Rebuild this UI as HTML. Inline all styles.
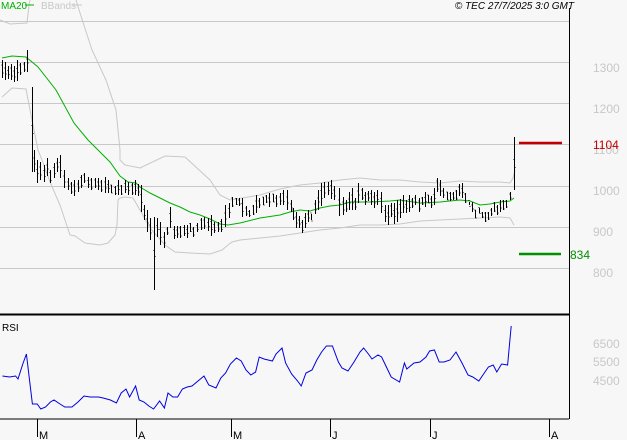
<!DOCTYPE html>
<html><head><meta charset="utf-8"><style>
html,body{margin:0;padding:0;background:#f7f7f7;width:627px;height:440px;overflow:hidden}
svg{display:block;font-family:"Liberation Sans",sans-serif}
</style></head><body>
<svg id="s" width="627" height="440" xmlns="http://www.w3.org/2000/svg">
<rect width="627" height="440" fill="#f7f7f7"/>
<g stroke="#c8c8c8" stroke-width="1">
<line x1="0" y1="21.5" x2="569" y2="21.5"/><line x1="0" y1="62.5" x2="569" y2="62.5"/><line x1="0" y1="103.5" x2="569" y2="103.5"/><line x1="0" y1="144.5" x2="569" y2="144.5"/><line x1="0" y1="186.5" x2="569" y2="186.5"/><line x1="0" y1="227.5" x2="569" y2="227.5"/><line x1="0" y1="268.5" x2="569" y2="268.5"/>
</g>
<g fill="#c8c8c8" font-size="12">
<text x="593" y="72">1300</text><text x="593" y="113">1200</text><text x="593" y="154">1100</text><text x="593" y="195">1000</text><text x="593" y="236">900</text><text x="593" y="277">800</text>
<text x="593" y="348">6500</text><text x="593" y="366">5500</text><text x="593" y="385">4500</text>
</g>
<polyline fill="none" stroke="#c8c8c8" points="0,20 10,24 27,23 29,5 30,0"/>
<polyline fill="none" stroke="#c8c8c8" points="76,0 80,13 92,50 106,80 116,110 120,150 120,160 125,165 140,168 165,156 185,157 210,180 220,195 230,200 260,195 280,189 300,185 320,183 340,180 360,178 380,180 400,180 420,182 440,183 460,181 480,182 500,182 510,183 513,178 515,170"/>
<polyline fill="none" stroke="#c8c8c8" points="2,97 12,88 26,89 32,120 38,150 42,160 50,182 60,205 70,235 75,236 85,243 100,245 108,243 115,235 117,225 118,200 120,198 125,197 133,198 140,210 150,228 165,245 175,252 190,253 210,254 222,250 228,245 232,242 240,240 260,238 280,236 300,233 320,230 340,228 360,225 380,225 400,224 420,221 440,220 460,219 480,218 500,217 510,218 514,225"/>
<polyline fill="none" stroke="#00b000" points="2,58 12,56 26,57 38,67 56,90 74,123 88,140 100,152 110,162 120,176 128,182 136,183 140,187 150,193 160,198 170,203 180,207 190,212 200,215 210,219 220,224 228,225 240,223 260,218 280,215 290,212 300,210 310,211 320,208 330,206 340,205 350,202 370,202 390,201 400,200 420,203 440,202 460,200 470,201 480,205 490,204 500,202 510,201 514,198"/>
<g id="bars" stroke="#000" stroke-width="1"></g>
<line x1="519" y1="143" x2="562" y2="143" stroke="#c00000" stroke-width="2.5"/>
<text x="593" y="149" fill="#c00000" font-size="12">1104</text>
<line x1="519" y1="254" x2="561" y2="254" stroke="#009000" stroke-width="2.5"/>
<text x="570" y="259" fill="#009000" font-size="12">834</text>
<line x1="0" y1="314.5" x2="569" y2="314.5" stroke="#000" stroke-width="2"/>
<line x1="569.5" y1="8" x2="569.5" y2="419" stroke="#000"/>
<line x1="0" y1="419" x2="569" y2="419" stroke="#000"/>
<text x="2" y="331" font-size="10" fill="#000">RSI</text>
<polyline id="rsi" fill="none" stroke="#0000e0" points=""/>
<g stroke="#000"><line x1="37.5" y1="419" x2="37.5" y2="437"/><line x1="136.5" y1="419" x2="136.5" y2="437"/><line x1="231.5" y1="419" x2="231.5" y2="437"/><line x1="330.5" y1="419" x2="330.5" y2="437"/><line x1="430.5" y1="419" x2="430.5" y2="437"/><line x1="549.5" y1="419" x2="549.5" y2="437"/></g>
<g font-size="11" fill="#000"><text x="39" y="439">M</text><text x="138" y="439">A</text><text x="233" y="439">M</text><text x="332" y="439">J</text><text x="432" y="439">J</text><text x="551" y="439">A</text></g>
<text x="1" y="9" font-size="10" fill="#00b000">MA20</text><line x1="25" y1="5" x2="34" y2="5" stroke="#00b000"/>
<text x="41" y="9" font-size="10" fill="#c8c8c8">BBands</text><line x1="73" y1="5" x2="82" y2="5" stroke="#c8c8c8"/>
<text x="574" y="9" font-size="10" font-style="italic" fill="#000" text-anchor="end">© TEC 27/7/2025 3:0 GMT</text>
</svg>
<script>
var d=[[2,60,78],[5,62,80],[8,66,79],[11,64,80],[14,66,82],[17,60,81],[20,63,75],[24,62,72],[27,50,72],[32,87,172],[34,150,172],[37,160,183],[40,162,180],[44,165,182],[47,158,176],[50,170,183],[54,163,178],[57,158,172],[60,155,178],[64,170,188],[68,178,190],[71,182,194],[74,180,196],[78,180,192],[81,175,188],[84,173,183],[88,177,188],[91,178,190],[95,178,188],[98,178,190],[101,180,192],[105,177,193],[108,180,193],[111,185,193],[115,186,195],[118,180,195],[121,185,195],[125,180,193],[128,182,195],[132,183,195],[135,180,195],[138,184,196],[141,185,212],[144,205,220],[147,210,232],[150,218,240],[154,217,290],[157,218,237],[160,222,245],[164,232,248],[167,227,235],[170,207,228],[174,226,239],[177,226,238],[180,226,238],[184,225,236],[187,225,238],[190,223,232],[193,227,237],[197,223,232],[201,218,230],[204,217,229],[208,218,231],[211,215,236],[214,222,233],[218,222,232],[221,219,232],[225,205,227],[229,203,218],[232,197,207],[236,198,205],[239,198,206],[242,198,217],[246,206,216],[249,210,217],[253,205,215],[256,195,213],[259,198,208],[263,197,205],[266,195,203],[269,193,207],[273,194,202],[276,195,207],[280,193,205],[283,190,205],[287,190,210],[291,200,212],[293,208,220],[296,212,228],[299,216,228],[302,220,233],[305,213,228],[308,210,222],[311,214,220],[315,200,214],[318,190,210],[321,183,206],[324,182,198],[328,182,195],[331,180,199],[334,186,200],[339,188,216],[343,197,215],[346,200,212],[349,192,210],[352,188,210],[355,198,210],[358,183,203],[362,188,200],[365,192,205],[368,191,201],[371,190,205],[374,192,208],[377,190,205],[381,192,213],[385,205,222],[388,205,225],[391,203,217],[394,203,224],[397,200,222],[400,199,218],[403,195,213],[406,200,213],[409,195,212],[412,198,208],[415,195,205],[419,198,212],[422,197,205],[425,192,207],[428,195,203],[431,196,208],[434,188,205],[437,178,192],[440,180,196],[443,188,198],[447,192,200],[450,192,201],[453,192,200],[456,190,200],[459,184,196],[462,183,198],[465,193,203],[469,202,205],[472,202,212],[475,210,218],[479,208,213],[482,212,218],[485,212,222],[488,212,220],[491,208,216],[494,202,212],[497,205,215],[500,200,212],[503,200,210],[506,200,208],[510,192,200],[514,137,190]];
var g=document.getElementById('bars'),h='';
d.forEach(function(b,i){var x=b[0]+0.5,m=(b[1]+b[2])/2,o=(i%3)-1;h+='<line x1="'+x+'" y1="'+b[1]+'" x2="'+x+'" y2="'+b[2]+'"/><line x1="'+(x-1)+'" y1="'+(m-3+o)+'" x2="'+x+'" y2="'+(m-3+o)+'"/><line x1="'+x+'" y1="'+(m+3-o)+'" x2="'+(x+1)+'" y2="'+(m+3-o)+'"/>';});
g.innerHTML=h;
var r="2,376 8,377 13,376 15,379 19,364 22,354 27,404 31,404 34,409 38,407 42,402 45,400 50,404 54,407 60,407 65,402 70,396 75,397 82,397 86,398 92,400 97,403 101,393 105,389 108,397 113,386 116,400 120,402 124,406 128,409 133,401 137,408 140,393 144,397 148,397 152,389 156,387 160,386 165,381 170,376 174,385 180,388 184,378 188,373 192,364 197,358 201,361 205,370 209,375 213,372 216,357 220,359 227,361 230,354 235,348 238,363 243,374 248,381 251,386 255,373 260,370 264,360 268,352 272,346 277,346 282,362 285,368 290,371 295,362 300,352 303,348 307,354 310,359 315,355 318,357 322,367 326,377 333,382 337,363 339,369 342,366 345,363 350,362 355,357 358,351 362,350 366,362 370,362 375,360 380,352 385,363 390,375 394,377 399,381 403,374 407,367 411,365 414,372 418,364 423,365 426,326".split(" ").map(function(p){var a=p.split(",");return (a[0]*1.2).toFixed(1)+","+a[1];}).join(" ");
document.getElementById('rsi').setAttribute('points',r);
</script>
</body></html>
